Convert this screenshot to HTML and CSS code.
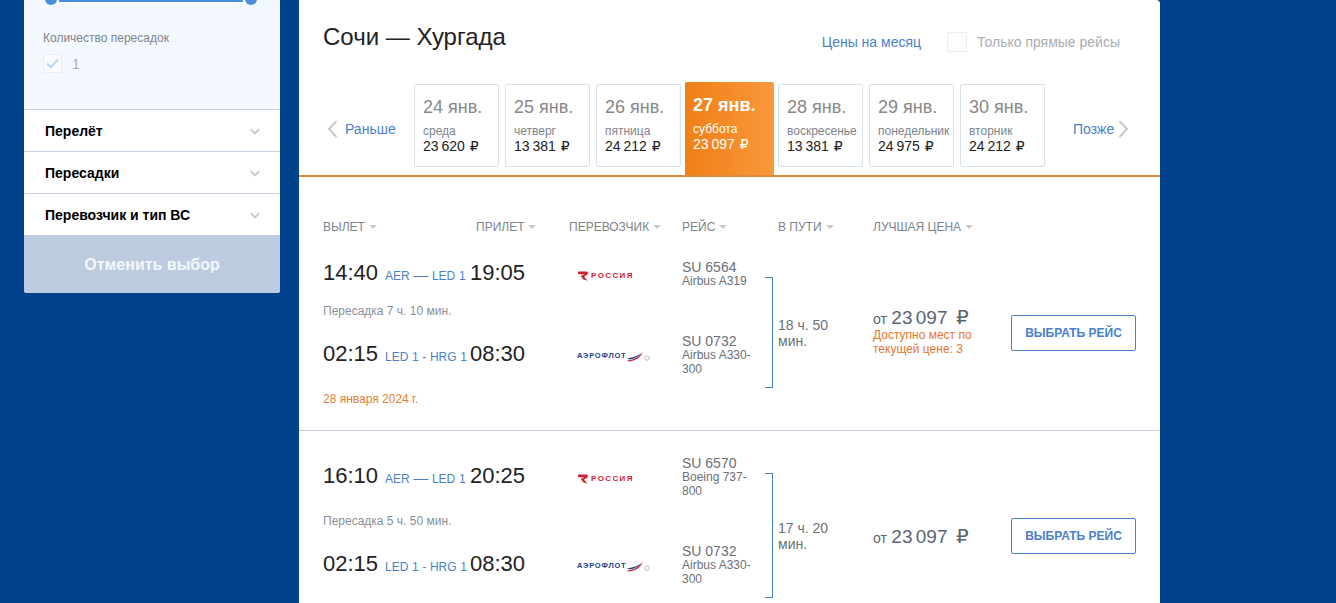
FILE: index.html
```html
<!DOCTYPE html>
<html lang="ru">
<head>
<meta charset="utf-8">
<title>Сочи — Хургада</title>
<link rel="stylesheet" href="styles.css">
</head>
<body>
<div class="page">
  <aside class="sidebar">
    <div class="filter">
      <div class="slider"><span class="thumb"></span><span class="track"></span><span class="thumb"></span></div>
      <div class="filter-label">Количество пересадок</div>
      <div class="filter-check">
        <span class="box box-sm"><svg width="13" height="11" viewBox="0 0 13 11"><path d="M1 5.500l3.800 3.800L12 1.500" fill="none" stroke="#bcd6ee" stroke-width="2"/></svg></span>
        <span class="filter-num">1</span>
      </div>
    </div>
    <div class="acc"><span>Перелёт</span><svg class="chev" width="10" height="7" viewBox="0 0 12 8"><path d="M1 1.200l5 5 5-5" fill="none" stroke="#c9c9c9" stroke-width="2.400"/></svg></div>
    <div class="acc"><span>Пересадки</span><svg class="chev" width="10" height="7" viewBox="0 0 12 8"><path d="M1 1.200l5 5 5-5" fill="none" stroke="#c9c9c9" stroke-width="2.400"/></svg></div>
    <div class="acc"><span>Перевозчик и тип ВС</span><svg class="chev" width="10" height="7" viewBox="0 0 12 8"><path d="M1 1.200l5 5 5-5" fill="none" stroke="#c9c9c9" stroke-width="2.400"/></svg></div>
    <div class="reset">Отменить выбор</div>
  </aside>

  <main class="main">
    <header class="top">
      <h1 class="title">Сочи — Хургада</h1>
      <div class="top-right">
        <a class="link">Цены на месяц</a>
        <span class="box box-lg"></span>
        <span class="direct">Только прямые рейсы</span>
      </div>
    </header>

    <nav class="days">
      <a class="nav nav-prev"><svg width="11" height="18" viewBox="0 0 11 18"><path d="M9.500 1L2 9l7.500 8" fill="none" stroke="#c8c8c8" stroke-width="2"/></svg><span>Раньше</span></a>
      <div class="day-list">
        <div class="day"><div class="d-date">24 янв.</div><div class="d-week">среда</div><div class="d-price">23 620 <span class="rub">₽</span></div></div>
        <div class="day"><div class="d-date">25 янв.</div><div class="d-week">четверг</div><div class="d-price">13 381 <span class="rub">₽</span></div></div>
        <div class="day"><div class="d-date">26 янв.</div><div class="d-week">пятница</div><div class="d-price">24 212 <span class="rub">₽</span></div></div>
        <div class="day day-active"><div class="d-date">27 янв.</div><div class="d-week">суббота</div><div class="d-price">23 097 <span class="rub">₽</span></div></div>
        <div class="day"><div class="d-date">28 янв.</div><div class="d-week">воскресенье</div><div class="d-price">13 381 <span class="rub">₽</span></div></div>
        <div class="day"><div class="d-date">29 янв.</div><div class="d-week">понедельник</div><div class="d-price">24 975 <span class="rub">₽</span></div></div>
        <div class="day"><div class="d-date">30 янв.</div><div class="d-week">вторник</div><div class="d-price">24 212 <span class="rub">₽</span></div></div>
      </div>
      <a class="nav nav-next"><span>Позже</span><svg width="11" height="18" viewBox="0 0 11 18"><path d="M1.500 1L9 9l-7.500 8" fill="none" stroke="#c8c8c8" stroke-width="2"/></svg></a>
    </nav>

    <div class="thead">
      <span class="th th-dep">ВЫЛЕТ</span>
      <span class="th th-arr">ПРИЛЕТ</span>
      <span class="th th-car">ПЕРЕВОЗЧИК</span>
      <span class="th th-fl">РЕЙС</span>
      <span class="th th-way">В ПУТИ</span>
      <span class="th th-pr">ЛУЧШАЯ ЦЕНА</span>
    </div>

    <section class="offer">
      <div class="segs">
        <div class="seg">
          <span class="time">14:40</span><span class="code">AER <span class="dash">—</span> LED 1</span><span class="time">19:05</span>
          <span class="logo logo-r"><svg width="12" height="10" viewBox="0 0 12 10"><path d="M1 .5h8.500c1.500 0 2 2.500.5 3.500L7 5.500 10.500 9.800 6.500 8.500 3.500 5l4-1.500L1 3z" fill="#d3202f"/></svg><span class="r-text">РОССИЯ</span></span>
          <div class="flight"><div class="fl-no">SU 6564</div><div class="fl-ac">Airbus A319</div></div>
        </div>
        <div class="transfer">Пересадка 7 ч. 10 мин.</div>
        <div class="seg">
          <span class="time">02:15</span><span class="code">LED 1 - HRG 1</span><span class="time">08:30</span>
          <span class="logo logo-a"><span class="a-text">АЭРОФЛОТ</span><svg width="23" height="11" viewBox="0 0 23 11"><path d="M0 9.500C6 9 12 6 16 1 14 6 9 10 1 10.500z" fill="#c8273f"/><path d="M3 8.500C8 7.500 12 5 15 2 12 4 7 6.500 0 7.500z" fill="#1d3d86"/><circle cx="20" cy="7" r="2.200" fill="none" stroke="#bbb"/></svg></span>
          <div class="flight"><div class="fl-no">SU 0732</div><div class="fl-ac">Airbus A330-300</div></div>
        </div>
      </div>
      <div class="side">
        <span class="bracket"></span>
        <div class="way">18 ч. 50 мин.</div>
        <div class="price">
          <div class="p-main"><span class="p-from">от</span> <span class="p-val">23 097</span> <span class="rub p-rub">₽</span></div>
          <div class="p-note">Доступно мест по текущей цене: 3</div>
        </div>
        <a class="btn">ВЫБРАТЬ РЕЙС</a>
      </div>
      <div class="next-date">28 января 2024 г.</div>
    </section>

    <section class="offer">
      <div class="segs">
        <div class="seg">
          <span class="time">16:10</span><span class="code">AER <span class="dash">—</span> LED 1</span><span class="time">20:25</span>
          <span class="logo logo-r"><svg width="12" height="10" viewBox="0 0 12 10"><path d="M1 .5h8.500c1.500 0 2 2.500.5 3.500L7 5.500 10.500 9.800 6.500 8.500 3.500 5l4-1.500L1 3z" fill="#d3202f"/></svg><span class="r-text">РОССИЯ</span></span>
          <div class="flight"><div class="fl-no">SU 6570</div><div class="fl-ac">Boeing 737-800</div></div>
        </div>
        <div class="transfer">Пересадка 5 ч. 50 мин.</div>
        <div class="seg">
          <span class="time">02:15</span><span class="code">LED 1 - HRG 1</span><span class="time">08:30</span>
          <span class="logo logo-a"><span class="a-text">АЭРОФЛОТ</span><svg width="23" height="11" viewBox="0 0 23 11"><path d="M0 9.500C6 9 12 6 16 1 14 6 9 10 1 10.500z" fill="#c8273f"/><path d="M3 8.500C8 7.500 12 5 15 2 12 4 7 6.500 0 7.500z" fill="#1d3d86"/><circle cx="20" cy="7" r="2.200" fill="none" stroke="#bbb"/></svg></span>
          <div class="flight"><div class="fl-no">SU 0732</div><div class="fl-ac">Airbus A330-300</div></div>
        </div>
      </div>
      <div class="side">
        <span class="bracket"></span>
        <div class="way">17 ч. 20 мин.</div>
        <div class="price">
          <div class="p-main"><span class="p-from">от</span> <span class="p-val">23 097</span> <span class="rub p-rub">₽</span></div>
        </div>
        <a class="btn">ВЫБРАТЬ РЕЙС</a>
      </div>
    </section>
  </main>
</div>
</body>
</html>
```

FILE: styles.css
```css
* { box-sizing: border-box; }
html, body { margin: 0; height: 100%; overflow: hidden; }
body { background: #00438c; font-family: "Liberation Sans", Arial, sans-serif; color: #222; }

.page { display: flex; align-items: flex-start; padding-left: 24px; gap: 19px; height: 603px; overflow: hidden; }

/* Sidebar */
.sidebar { width: 256px; flex: none; border-radius: 0 0 3px 3px; overflow: hidden; background: #fff; }
.filter { height: 109px; background: #f4f9ff; padding: 0 19px; display: flow-root; }
.slider { display: flex; align-items: center; height: 12px; margin: -7px 0 0 2px; width: 212px; }
.track { flex: 1; height: 4px; background: #4a8fdc; margin: 2px 2px 0; }
.thumb { width: 12px; height: 12px; border-radius: 50%; background: #4a8fdc; flex: none; }
.filter-label { font-size: 12px; line-height: 14px; color: #7d848c; margin-top: 26px; }
.filter-check { display: flex; align-items: center; gap: 10px; margin-top: 9px; }
.box { width: 20px; height: 20px; background: #fafcff; border: 1px solid #ebeff4; display: flex; align-items: center; justify-content: center; flex: none; }
.box-sm { width: 19px; height: 19px; }
.filter-num { font-size: 14px; color: #a9adb2; }
.acc { height: 42px; border-top: 1px solid #c3d0e0; padding: 0 20px 0 21px; display: flex; align-items: center; justify-content: space-between; font-size: 14px; font-weight: 700; color: #000; background: #fff; }
.chev { margin-top: 1px; }
.reset { height: 58px; padding-top: 1px; background: #bccbdf; color: #f4f7fb; font-size: 16px; font-weight: 700; display: flex; align-items: center; justify-content: center; }

/* Main */
.main { width: 861px; flex: none; height: 800px; background: #fff; border-radius: 0 4px 0 0; }
.top { height: 82px; padding: 0 40px 0 24px; display: flex; justify-content: space-between; }
.title { margin: 25px 0 0; font-size: 24px; font-weight: 400; line-height: 24px; color: #222; }
.top-right { display: flex; align-items: center; height: 20px; margin-top: 32px; font-size: 14px; }
.link { color: #4a7fc9; margin-right: 26px; }
.box-lg { background: #fcfdfe; margin-right: 10px; }
.direct { color: #a9adb2; }

.days { height: 95px; border-bottom: 2px solid #e2893a; display: flex; align-items: flex-start; }
.nav { display: flex; align-items: center; gap: 7px; font-size: 14px; color: #4a7fc9; height: 18px; margin-top: 38px; flex: none; }
.nav-prev { width: 115px; padding-left: 28px; }
.nav-next { margin-left: 28px; gap: 4px; }
.day-list { display: flex; gap: 6px; align-items: flex-start; }
.day { width: 85px; height: 83px; margin-top: 2px; border: 1px solid #d7e1ec; border-radius: 2px; padding: 0 0 0 8px; }
.d-date { font-size: 18px; line-height: 18px; color: #888; margin-top: 13px; white-space: nowrap; }
.d-week { font-size: 12px; line-height: 14px; color: #7d848c; margin-top: 8px; white-space: nowrap; }
.d-price { font-size: 14px; line-height: 16px; color: #222; margin-top: 0; word-spacing: -1px; white-space: nowrap; }
.rub { font-family: "Liberation Sans", "DejaVu Sans", sans-serif; font-size: 14px; margin-left: 2px; }
.day-active { width: 89px; height: 93px; margin: 0 -2px; border: 0; border-radius: 2px 2px 0 0; padding-left: 8px; background: linear-gradient(90deg, #f07f15, #f9983c); }
.day-active .d-date { color: #fff; font-weight: 700; margin-top: 14px; }
.day-active .d-week, .day-active .d-price { color: #fff; }
.day-active .d-week { margin-top: 8px; }

/* Table */
.thead { display: flex; height: 58px; padding: 43px 0 0 24px; font-size: 12px; line-height: 14px; color: #7d848c; }
.th { display: flex; align-items: center; gap: 4px; height: 14px; }
.th::after { content: ""; border: 4px solid transparent; border-top-color: #c9c9c9; border-bottom: 0; }
.th-dep { width: 153px; }
.th-arr { width: 93px; }
.th-car { width: 113px; }
.th-fl { width: 96px; }
.th-way { width: 95px; }

.offer { display: grid; grid-template-columns: 442px 1fr; padding: 25px 24px; }
.offer + .offer { border-top: 1px solid #c3d0e0; }
.segs { min-width: 0; }
.seg { display: grid; grid-template-columns: 62px 85px 107px 105px 83px; align-items: center; }
.time { font-size: 22px; line-height: 24px; color: #222; padding-bottom: 3px; }
.code { font-size: 12px; line-height: 16px; color: #4a7fc9; white-space: nowrap; padding-top: 4px; word-spacing: .3px; }
.dash { font-size: 15px; line-height: 14px; }
.logo { display: flex; align-items: center; gap: 2px; padding-top: 2px; white-space: nowrap; }
.logo-r { padding-top: 3px; }
.r-text { font-size: 8px; line-height: 10px; font-weight: 700; letter-spacing: 1.400px; color: #d3202f; }
.a-text { font-size: 7.500px; line-height: 10px; font-weight: 700; letter-spacing: .8px; color: #1d3d86; }
.logo-a { gap: 0; }
.fl-no { font-size: 14px; line-height: 14px; color: #6a7077; }
.fl-ac { font-size: 12px; line-height: 14px; color: #6a7077; }
.transfer { height: 46px; font-size: 12px; line-height: 46px; color: #8a8f95; }

.side { display: flex; align-items: center; margin: 17px 0 -12px; }
.bracket { width: 8px; align-self: stretch; border: 1px solid #3f7fc4; border-left: 0; flex: none; }
.way { width: 70px; margin: 0 25px 0 5px; font-size: 14px; line-height: 16px; color: #6a7077; flex: none; }
.price { width: 138px; flex: none; padding-right: 20px; }
.p-main { color: #5a6470; padding-top: 3px; line-height: 18px; white-space: nowrap; }
.p-from { font-size: 14px; }
.p-val { font-size: 19px; word-spacing: -2px; }
.p-rub { font-size: 20px; margin-left: 4px; }
.p-note { font-size: 12px; line-height: 14px; color: #e8762a; margin-bottom: 4px; }
.btn { width: 125px; height: 36px; flex: none; border: 1px solid #4a7fc9; border-radius: 2px; display: flex; align-items: center; justify-content: center; font-size: 12px; font-weight: 700; color: #4a7fc9; }
.next-date { grid-column: 1 / -1; font-size: 12px; line-height: 14px; color: #e57f33; margin-top: 16px; margin-bottom: -1px; }
```
